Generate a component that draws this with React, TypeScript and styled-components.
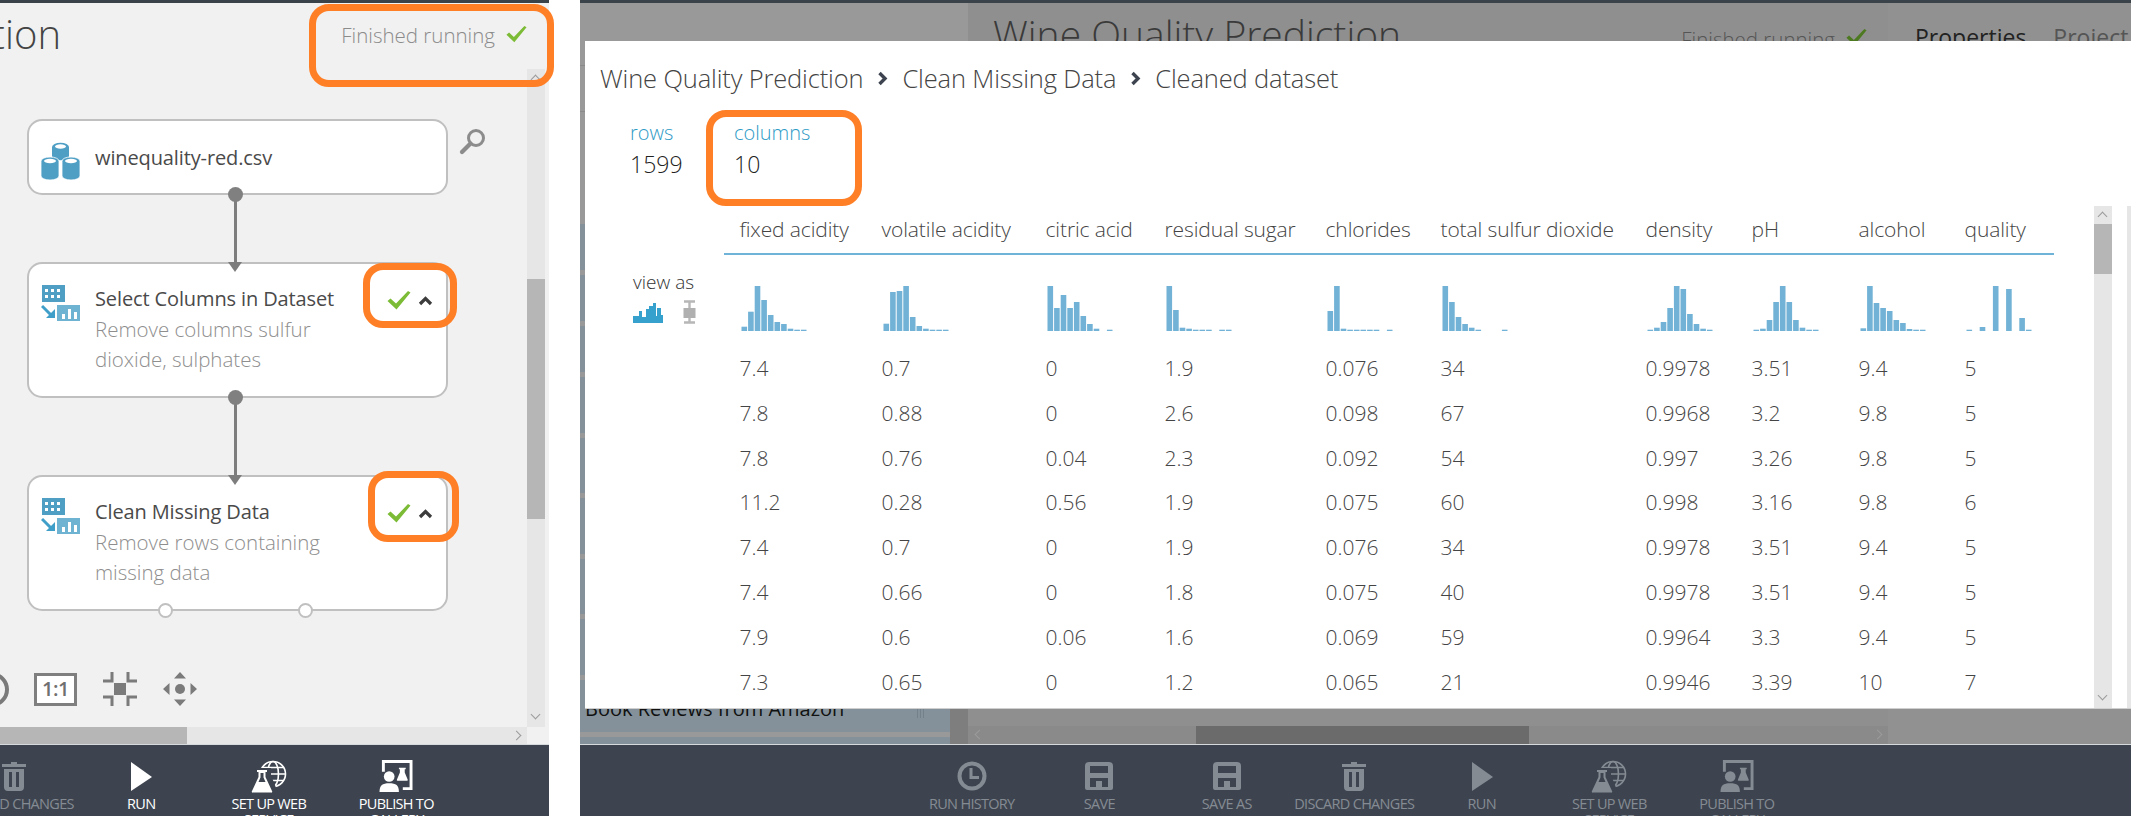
import React from "react";
import styled, { createGlobalStyle } from "styled-components";

const GlobalStyle = createGlobalStyle`
  html, body {
    margin: 0;
    padding: 0;
    width: 2131px;
    height: 816px;
    overflow: hidden;
    background: #fff;
    font-family: "Open Sans", "Liberation Sans", sans-serif;
  }
`;

const Page = styled.div`
  position: relative;
  display: flex;
  width: 2131px;
  height: 816px;
  overflow: hidden;
`;

const LeftShot = styled.section`
  display: flex;
  flex-direction: column;
  width: 549px;
  margin-right: 31px;
  background: #f1f1f1;
`;

const RightShot = styled.section`
  position: relative;
  display: flex;
  flex-direction: column;
  flex: 1;
  min-width: 0;
`;

const TopStrip = styled.div`
  flex: none;
  height: 3px;
  background: #3a424a;
`;

const HeaderRow = styled.header`
  flex: none;
  display: flex;
  justify-content: space-between;
  height: 66px;
`;

const ClippedTitle = styled.div`
  display: flex;
  justify-content: flex-end;
  width: 61px;
  overflow: hidden;
  white-space: nowrap;
  font-size: 40px;
  font-weight: 300;
  line-height: 62px;
  color: #444;
`;

const Status = styled.div`
  display: flex;
  gap: 11px;
  align-items: center;
  height: 64px;
  margin-right: 22px;
  font-size: 20.5px;
  font-weight: 300;
  color: #8b8b8b;
  svg {
    margin-top: -2px;
  }
`;

const MainRow = styled.div`
  flex: 1;
  display: flex;
  min-height: 0;
`;

const Canvas = styled.div`
  position: relative;
  flex: none;
  width: 527px;
`;

const VScroll = styled.div<{ $thumbTop: number; $thumbHeight: number; $dim?: boolean }>`
  position: relative;
  flex: none;
  width: 18px;
  background: ${(p) => (p.$dim ? "linear-gradient(#999 0 66px, #7e7e7e 66px)" : "#e6e6e6")};
  &::after {
    content: "";
    position: absolute;
    left: 0;
    right: 0;
    top: ${(p) => p.$thumbTop}px;
    height: ${(p) => p.$thumbHeight}px;
    background: #b6b6b6;
  }
`;

const ScrollArrow = styled.span<{ $side: "top" | "bottom" | "left" | "right" }>`
  position: absolute;
  width: 7px;
  height: 7px;
  box-sizing: border-box;
  border-left: 1px solid #9b9b9b;
  border-top: 1px solid #9b9b9b;
  ${(p) => p.$side === "top" && "top: 7px; left: 5px; transform: rotate(45deg);"}
  ${(p) => p.$side === "bottom" && "bottom: 9px; left: 5px; transform: rotate(225deg);"}
  ${(p) => p.$side === "right" && "top: 5px; right: 7px; transform: rotate(135deg);"}
  ${(p) => p.$side === "left" && "top: 5px; left: 8px; transform: rotate(-45deg);"}
`;

const HScrollRow = styled.div`
  position: relative;
  flex: none;
  display: flex;
  height: 17px;
`;

const HTrack = styled.div`
  position: relative;
  width: 527px;
  background: #e6e6e6;
`;

const HThumb = styled.div`
  width: 187px;
  height: 100%;
  background: #b6b6b6;
`;

const Node = styled.div<{ $top: number; $height: number }>`
  position: absolute;
  left: 27px;
  top: ${(p) => p.$top}px;
  box-sizing: border-box;
  width: 421px;
  height: ${(p) => p.$height}px;
  display: flex;
  background: #fff;
  border: 2px solid #c0c0c0;
  border-radius: 15px;
`;

const NodeIcon = styled.div<{ $top: number }>`
  flex: none;
  width: 66px;
  padding: ${(p) => p.$top}px 0 0 12px;
  box-sizing: border-box;
  svg {
    display: block;
  }
`;

const NodeText = styled.div<{ $top: number }>`
  padding-top: ${(p) => p.$top}px;
`;

const NodeTitle = styled.div`
  font-size: 20px;
  font-weight: 400;
  line-height: 30px;
  letter-spacing: -0.12px;
  color: #4a4a4a;
  white-space: nowrap;
`;

const NodeNote = styled.div`
  width: 270px;
  font-size: 20.5px;
  font-weight: 300;
  line-height: 30px;
  color: #8e8e8e;
`;

const NodeState = styled.div<{ $top: number }>`
  position: absolute;
  left: 358px;
  top: ${(p) => p.$top}px;
  display: flex;
  align-items: center;
  gap: 7px;
`;

const Port = styled.span<{ $x: number; $y: number; $hollow?: boolean }>`
  position: absolute;
  left: ${(p) => p.$x - 7}px;
  top: ${(p) => p.$y - 7}px;
  box-sizing: border-box;
  width: 15px;
  height: 15px;
  border-radius: 50%;
  background: ${(p) => (p.$hollow ? "#fff" : "#808080")};
  border: ${(p) => (p.$hollow ? "2px solid #c0c0c0" : "none")};
`;

const Wire = styled.span<{ $y: number; $h: number }>`
  position: absolute;
  left: 234px;
  top: ${(p) => p.$y}px;
  width: 3px;
  height: ${(p) => p.$h}px;
  background: #7d7d7d;
`;

const WireHead = styled.span<{ $y: number }>`
  position: absolute;
  left: 228px;
  top: ${(p) => p.$y}px;
  width: 0;
  height: 0;
  border-left: 7.5px solid transparent;
  border-right: 7.5px solid transparent;
  border-top: 10px solid #7d7d7d;
`;

const Loupe = styled.div`
  position: absolute;
  left: 459px;
  top: 59px;
`;

const ZoomTools = styled.div`
  position: absolute;
  left: -26px;
  top: 603px;
  display: flex;
  align-items: center;
  height: 34px;
`;

const ZoomCircle = styled.span`
  box-sizing: border-box;
  width: 35px;
  height: 35px;
  margin-right: 25px;
  border: 4px solid #7a7a7a;
  border-radius: 50%;
`;

const ActualSize = styled.span`
  box-sizing: border-box;
  width: 43px;
  height: 33px;
  margin-right: 26px;
  border: 3px solid #7f7f7f;
  background: #fff;
  text-align: center;
  font-size: 20px;
  font-weight: 600;
  line-height: 26px;
  letter-spacing: -0.5px;
  color: #707070;
`;

const ToolIcon = styled.span`
  display: block;
  width: 34px;
  height: 34px;
  margin-right: 26px;
`;

const CommandBar = styled.footer<{ $left: number }>`
  flex: none;
  display: flex;
  height: 71px;
  overflow: hidden;
  background: #3d444f;
  border-top: 1px solid #d6dadd;
  & > :first-child {
    margin-left: ${(p) => p.$left}px;
  }
`;

const Command = styled.div<{ $active?: boolean }>`
  flex: none;
  display: flex;
  flex-direction: column;
  align-items: center;
  width: 127.5px;
  padding-top: 15px;
  box-sizing: border-box;
  color: ${(p) => (p.$active ? "#ffffff" : "#858b93")};
  svg {
    display: block;
    flex: none;
    height: 33px;
  }
`;

const CommandLabel = styled.div`
  flex: none;
  width: 124px;
  margin-top: 3px;
  text-align: center;
  font-size: 14.5px;
  font-weight: 400;
  line-height: 16px;
  letter-spacing: -0.7px;
`;

const Backdrop = styled.div`
  flex: 1;
  display: flex;
  min-height: 0;
  background: #919191;
`;

const NavColumn = styled.div`
  flex: none;
  display: flex;
  flex-direction: column;
  width: 370px;
  background: #999;
`;

const NavRow = styled.div<{ $h: number; $blue?: boolean; $line?: boolean }>`
  flex: none;
  height: ${(p) => p.$h}px;
  padding-left: 5px;
  overflow: hidden;
  white-space: nowrap;
  font-size: 21px;
  line-height: ${(p) => p.$h}px;
  color: #0f3c4e;
  background: ${(p) => (p.$blue ? "#84919a" : "#999")};
  border-bottom: ${(p) => (p.$line ? "1px solid #8a8a8a" : "none")};
`;

const BookRow = styled(NavRow)`
  position: relative;
  line-height: 58px;
  font-size: 20px;
  color: #111;
  &::after {
    content: "";
    position: absolute;
    left: 337px;
    top: 26px;
    width: 8px;
    height: 12px;
    background: repeating-linear-gradient(90deg, #74808a 0 1px, transparent 1px 3px);
  }
`;

const DimCenter = styled.div`
  position: relative;
  flex: none;
  display: flex;
  flex-direction: column;
  width: 920px;
  background: #8f8f8f;
`;

const DimTool = styled.span<{ $x: number }>`
  position: absolute;
  left: ${(p) => p.$x}px;
  bottom: 35px;
  width: 30px;
  height: 4px;
  border-radius: 0 0 15px 15px;
  background: #5c5c5c;
`;

const DimHeader = styled.div`
  flex: 1;
  display: flex;
  justify-content: space-between;
  padding: 0 21px 0 25px;
  font-weight: 300;
  color: #3a3a3a;
`;

const DimTitle = styled.div`
  font-size: 39px;
  line-height: 62px;
  white-space: nowrap;
`;

const DimStatus = styled.div`
  display: flex;
  gap: 11px;
  align-items: flex-start;
  padding-top: 22px;
  font-size: 20.5px;
  color: #555;
  svg {
    margin-top: 3px;
  }
`;

const DimHScroll = styled.div`
  flex: none;
  display: flex;
  position: relative;
  height: 18px;
  background: #8a8a8a;
`;

const DimThumb = styled.div`
  width: 333px;
  margin-left: 228px;
  background: #6b6b6b;
`;

const DimSide = styled.div`
  flex: 1;
  display: flex;
  gap: 27px;
  padding: 18px 0 0 27px;
  font-size: 23px;
  color: #222;
  white-space: nowrap;
  span + span {
    color: #555;
  }
`;

const Modal = styled.div`
  position: absolute;
  left: 5px;
  top: 41px;
  right: 0;
  height: 667px;
  display: flex;
  flex-direction: column;
  overflow: hidden;
  background: #fff;
  box-shadow: 0 1px 0 #cfcfcf;
`;

const Breadcrumb = styled.nav`
  flex: none;
  display: flex;
  align-items: center;
  gap: 14px;
  height: 32px;
  padding: 21px 0 0 15px;
  font-size: 25.5px;
  font-weight: 300;
  letter-spacing: -0.15px;
  color: #444;
`;

const Stats = styled.div`
  flex: none;
  display: flex;
  height: 112px;
  padding: 26px 0 0 45px;
  box-sizing: border-box;
`;

const Stat = styled.div`
  width: 104px;
`;

const StatLabel = styled.div`
  font-size: 20px;
  font-weight: 300;
  line-height: 26px;
  color: #2e9bc6;
`;

const StatValue = styled.div`
  font-size: 23px;
  font-weight: 300;
  line-height: 36px;
  color: #222;
`;

const ModalBody = styled.div`
  flex: 1;
  display: flex;
  min-height: 0;
`;

const ViewAs = styled.div`
  flex: none;
  box-sizing: border-box;
  width: 139px;
  padding: 63px 0 0 48px;
  font-size: 19px;
  font-weight: 300;
  color: #333;
`;

const ViewIcons = styled.div`
  display: flex;
  gap: 19px;
  align-items: center;
  margin-top: 5px;
`;

const DataTable = styled.div`
  flex: none;
  width: 1330px;
`;

const columnTemplate = "142px 164px 119px 161px 115px 205px 106px 107px 106px 105px";

const HeadRow = styled.div`
  display: grid;
  grid-template-columns: ${columnTemplate};
  height: 47px;
  border-bottom: 2px solid #6fb3d8;
`;

const HeadCell = styled.div`
  padding: 8px 0 0 15.5px;
  font-size: 21px;
  font-weight: 300;
  line-height: 30px;
  letter-spacing: -0.12px;
  color: #444;
  white-space: nowrap;
`;

const HistRow = styled.div`
  display: grid;
  grid-template-columns: ${columnTemplate};
  height: 91px;
`;

const HistCell = styled.div`
  padding: 30px 0 0 15.5px;
  svg {
    display: block;
  }
`;

const ValueRow = styled.div`
  display: grid;
  grid-template-columns: ${columnTemplate};
  height: 44.8px;
`;

const ValueCell = styled.div`
  padding-left: 15.5px;
  font-size: 21px;
  font-weight: 300;
  line-height: 44.8px;
  color: #444;
`;

const ModalSide = styled.div`
  flex: 1;
  display: flex;
  justify-content: space-between;
  padding-left: 40px;
`;

const EdgeTrack = styled.div`
  width: 4px;
  background: #e6e6e6;
`;

const Callout = styled.div<{ $x: number; $y: number; $w: number; $h: number }>`
  position: absolute;
  left: ${(p) => p.$x}px;
  top: ${(p) => p.$y}px;
  width: ${(p) => p.$w}px;
  height: ${(p) => p.$h}px;
  box-sizing: border-box;
  border: 7px solid #ff7f27;
  border-radius: 20px;
`;

const Check = ({ size = 24, color = "#7cbb35" }: { size?: number; color?: string }) => (
  <svg width={size} height={size * 0.84} viewBox="0 0 24 20">
    <path d="M0.5 11 L3.5 8.5 L9 13.5 L21 1 L23.5 2.5 L9.5 19.5 Z" fill={color} />
  </svg>
);

const Chevron = () => (
  <svg width="15" height="11" viewBox="0 0 15 11">
    <path d="M2 9 L7.5 3.5 L13 9" fill="none" stroke="#3c3c3c" strokeWidth="3.2" />
  </svg>
);

const Crumb = () => (
  <svg width="11" height="15" viewBox="0 0 11 15">
    <path d="M2.5 2 L8 7.5 L2.5 13" fill="none" stroke="#3d444f" strokeWidth="3.4" />
  </svg>
);

const SearchIcon = () => (
  <svg width="27" height="27" viewBox="0 0 27 27">
    <circle cx="17" cy="10" r="7.5" fill="none" stroke="#8c8c8c" strokeWidth="3" />
    <path d="M11.5 15.5 L3 24" stroke="#8c8c8c" strokeWidth="4.2" strokeLinecap="round" />
  </svg>
);

const DatasetIcon = () => (
  <svg width="39" height="39" viewBox="0 0 39 39" fill="#4f9fc5">
    <path d="M11 6 a8 4 0 0 1 17 0 v9 a8 4 0 0 1 -17 0 Z" />
    <ellipse cx="19.5" cy="5.5" rx="5.5" ry="2.2" fill="#fff" />
    <path d="M0 20 a9 4 0 0 1 18 0 v15 a9 4 0 0 1 -18 0 Z" stroke="#fff" strokeWidth="0.8" />
    <ellipse cx="9" cy="20" rx="6" ry="2.2" fill="#fff" />
    <path d="M21 20 a9 4 0 0 1 18 0 v15 a9 4 0 0 1 -18 0 Z" stroke="#fff" strokeWidth="0.8" />
    <ellipse cx="30" cy="20" rx="6" ry="2.2" fill="#fff" />
  </svg>
);

const ModuleIcon = () => (
  <svg width="39" height="36" viewBox="0 0 39 36">
    <rect x="1" y="0" width="23" height="17" fill="#4f9fc5" />
    {[4, 10, 16].map((x) =>
      [4, 10].map((y) => <rect key={`${x}-${y}`} x={x} y={y} width="3" height="3" fill="#fff" />)
    )}
    <rect x="16" y="20" width="23" height="16" fill="#6fb3d3" />
    <rect x="21" y="29" width="3" height="5" fill="#fff" />
    <rect x="27" y="24" width="3" height="10" fill="#fff" />
    <rect x="33" y="27" width="3" height="7" fill="#fff" />
    <path d="M1 21 L11 31" stroke="#3f9fc8" strokeWidth="3" />
    <path d="M5 33 H14 V24 Z" fill="#3f9fc8" />
  </svg>
);

const FitIcon = () => (
  <svg width="34" height="34" viewBox="0 0 34 34" fill="none" stroke="#7b7b7b" strokeWidth="3">
    <path d="M9 0 V9 H0 M25 0 V9 H34 M9 34 V25 H0 M25 34 V25 H34" />
    <rect x="11" y="11" width="12" height="12" fill="#7b7b7b" stroke="none" />
  </svg>
);

const PanIcon = () => (
  <svg width="34" height="34" viewBox="0 0 34 34" fill="#7b7b7b">
    <circle cx="17" cy="17" r="5" />
    <path d="M17 0 L23 6.5 H11 Z M17 34 L23 27.5 H11 Z M0 17 L6.5 11 V23 Z M34 17 L27.5 11 V23 Z" />
  </svg>
);

const ClockIcon = () => (
  <svg viewBox="0 0 30 33" width="30">
    <circle cx="15" cy="16" r="12.5" fill="none" stroke="currentColor" strokeWidth="4" />
    <path d="M14 8 V17.5 H22" fill="none" stroke="currentColor" strokeWidth="3" />
  </svg>
);

const SaveIcon = () => (
  <svg viewBox="0 0 30 33" width="30">
    <path
      fillRule="evenodd"
      fill="currentColor"
      d="M5 2 H25 a4 4 0 0 1 4 4 V28 a2 2 0 0 1 -2 2 H3 a2 2 0 0 1 -2 -2 V6 a4 4 0 0 1 4 -4 Z M6 6 V13 H24 V6 Z M6 18 V27 H12 V21 H18 V27 H24 V18 Z"
    />
    <rect x="13.5" y="23" width="3" height="4" fill="currentColor" />
  </svg>
);

const TrashIcon = () => (
  <svg viewBox="0 0 26 33" width="26">
    <path fill="currentColor" d="M10 2 H16 V4 H25 V7 H1 V4 H10 Z" />
    <path
      fillRule="evenodd"
      fill="currentColor"
      d="M3 9 H23 V27 a4 4 0 0 1 -4 4 H7 a4 4 0 0 1 -4 -4 Z M8 12 V27 H11 V12 Z M15 12 V27 H18 V12 Z"
    />
  </svg>
);

const PlayIcon = () => (
  <svg viewBox="0 0 24 33" width="24">
    <path fill="currentColor" d="M2 2 L23 17 L2 31 Z" />
  </svg>
);

const WebIcon = () => (
  <svg viewBox="0 0 38 33" width="38">
    <g fill="none" stroke="currentColor" strokeWidth="1.6">
      <circle cx="23" cy="14" r="12.5" />
      <ellipse cx="23" cy="14" rx="5.5" ry="12.5" />
      <path d="M10.5 14 H35.5 M12.5 7.5 H33.5 M12.5 20.5 H33.5" />
    </g>
    <path fill="#3d444f" d="M6 8 H21 V15 L28 33 H0 Z" />
    <path
      fill="currentColor"
      d="M7 10 H17 V12 H15.5 V17 L22 31 a1 1 0 0 1 -1 1.6 H3 a1 1 0 0 1 -1 -1.6 L8.5 17 V12 H7 Z"
    />
    <path fill="#3d444f" d="M10.5 13 H13.5 V17.5 L15.5 22 H8.5 L10.5 17.5 Z" />
  </svg>
);

const PublishIcon = () => (
  <svg viewBox="0 0 34 34" width="34">
    <path fill="none" stroke="currentColor" strokeWidth="3" d="M4 12 V1.5 H32.5 V29.5 H24" />
    <path fill="currentColor" d="M20 8 H27 V9.5 H26 V13 L29 20 a1 1 0 0 1 -1 1.4 H19 a1 1 0 0 1 -1 -1.4 L21 13 V9.5 H20 Z" />
    <circle cx="10" cy="17" r="5.5" fill="currentColor" />
    <path fill="currentColor" d="M0 33 C0 26 3 24 10 24 C17 24 20 26 20 33 Z" />
  </svg>
);

const ViewHistIcon = () => (
  <svg width="31" height="21" viewBox="0 0 31 21">
    <path fill="#36a1cd" d="M0 21 V14 H6 V9 H9 V15 H13 V7 H16 V4 H20 V1 H23 V14 H24 V6 H28 V13 H30 V21 Z" />
  </svg>
);

const ViewBoxIcon = () => (
  <svg width="13" height="24" viewBox="0 0 13 24">
    <path fill="none" stroke="#b7b7b7" strokeWidth="2.4" d="M1 1.5 H12 M1 22.5 H12 M6.5 1.5 V22.5" />
    <rect x="0.5" y="8" width="12" height="10" fill="#b0b0b0" />
  </svg>
);

const Histogram = ({ bars }: { bars: number[] }) => (
  <svg width="70" height="46" viewBox="0 0 70 46">
    {bars.map((h, i) =>
      h > 0 ? <rect key={i} x={1.5 + i * 6.6} y={46 - h} width={5.6} height={h} fill="#72b2d6" /> : null
    )}
  </svg>
);

const columns = [
  { name: "fixed acidity", bars: [4.3, 19.3, 45, 31, 16, 9, 7, 2.3, 1.3, 1.3] },
  { name: "volatile acidity", bars: [7.3, 39, 40, 45, 14, 5, 2.3, 1.3, 1.3, 1.3] },
  { name: "citric acid", bars: [45, 23, 36, 23, 29, 15, 7, 2.3, 0, 1.3] },
  { name: "residual sugar", bars: [45, 21, 3.3, 2.3, 1.3, 1.3, 1.3, 0, 1.3, 1.3] },
  { name: "chlorides", bars: [20, 45, 2.3, 1.3, 1.3, 1.3, 1.3, 1.3, 0, 1.3] },
  { name: "total sulfur dioxide", bars: [45, 29, 14, 7, 3.3, 1.3, 0, 0, 0, 1.3] },
  { name: "density", bars: [1.3, 3.3, 9, 23, 45, 42, 17, 7, 2.3, 1.3] },
  { name: "pH", bars: [1.3, 2.3, 11, 29, 45, 29, 11, 3.3, 1.3, 1.3] },
  { name: "alcohol", bars: [2.7, 45, 28, 23, 20, 11, 8, 2, 1.3, 1.3] },
  { name: "quality", bars: [1.3, 0, 4, 0, 45, 0, 42, 0, 13, 1.3] },
];

const rows = [
  ["7.4", "0.7", "0", "1.9", "0.076", "34", "0.9978", "3.51", "9.4", "5"],
  ["7.8", "0.88", "0", "2.6", "0.098", "67", "0.9968", "3.2", "9.8", "5"],
  ["7.8", "0.76", "0.04", "2.3", "0.092", "54", "0.997", "3.26", "9.8", "5"],
  ["11.2", "0.28", "0.56", "1.9", "0.075", "60", "0.998", "3.16", "9.8", "6"],
  ["7.4", "0.7", "0", "1.9", "0.076", "34", "0.9978", "3.51", "9.4", "5"],
  ["7.4", "0.66", "0", "1.8", "0.075", "40", "0.9978", "3.51", "9.4", "5"],
  ["7.9", "0.6", "0.06", "1.6", "0.069", "59", "0.9964", "3.3", "9.4", "5"],
  ["7.3", "0.65", "0", "1.2", "0.065", "21", "0.9946", "3.39", "10", "7"],
];

const leftCommands = [
  { label: "DISCARD CHANGES", icon: <TrashIcon />, active: false },
  { label: "RUN", icon: <PlayIcon />, active: true },
  { label: "SET UP WEB SERVICE", icon: <WebIcon />, active: true },
  { label: "PUBLISH TO GALLERY", icon: <PublishIcon />, active: true },
];

const rightCommands = [
  { label: "RUN HISTORY", icon: <ClockIcon /> },
  { label: "SAVE", icon: <SaveIcon /> },
  { label: "SAVE AS", icon: <SaveIcon /> },
  { label: "DISCARD CHANGES", icon: <TrashIcon /> },
  { label: "RUN", icon: <PlayIcon /> },
  { label: "SET UP WEB SERVICE", icon: <WebIcon /> },
  { label: "PUBLISH TO GALLERY", icon: <PublishIcon /> },
];

function App() {
  return (
    <Page>
      <GlobalStyle />
      <LeftShot>
        <TopStrip />
        <HeaderRow>
          <ClippedTitle>Wine Quality Prediction</ClippedTitle>
          <Status>
            Finished running
            <Check size={21} />
          </Status>
        </HeaderRow>
        <MainRow>
          <Canvas>
            <Loupe>
              <SearchIcon />
            </Loupe>
            <Wire $y={125} $h={68} />
            <Wire $y={328} $h={78} />
            <Node $top={50} $height={76}>
              <NodeIcon $top={20}>
                <DatasetIcon />
              </NodeIcon>
              <NodeText $top={22}>
                <NodeTitle>winequality-red.csv</NodeTitle>
              </NodeText>
            </Node>
            <Node $top={193} $height={136}>
              <NodeIcon $top={21}>
                <ModuleIcon />
              </NodeIcon>
              <NodeText $top={20}>
                <NodeTitle>Select Columns in Dataset</NodeTitle>
                <NodeNote>Remove columns sulfur dioxide, sulphates</NodeNote>
              </NodeText>
              <NodeState $top={26}>
                <Check size={24} />
                <Chevron />
              </NodeState>
            </Node>
            <Node $top={406} $height={136}>
              <NodeIcon $top={21}>
                <ModuleIcon />
              </NodeIcon>
              <NodeText $top={20}>
                <NodeTitle>Clean Missing Data</NodeTitle>
                <NodeNote>Remove rows containing missing data</NodeNote>
              </NodeText>
              <NodeState $top={26}>
                <Check size={24} />
                <Chevron />
              </NodeState>
            </Node>
            <WireHead $y={193} />
            <WireHead $y={406} />
            <Port $x={235} $y={125} />
            <Port $x={235} $y={328} />
            <Port $x={165} $y={541} $hollow />
            <Port $x={305} $y={541} $hollow />
            <ZoomTools>
              <ZoomCircle />
              <ActualSize>1:1</ActualSize>
              <ToolIcon>
                <FitIcon />
              </ToolIcon>
              <ToolIcon>
                <PanIcon />
              </ToolIcon>
            </ZoomTools>
          </Canvas>
          <VScroll $thumbTop={210} $thumbHeight={240}>
            <ScrollArrow $side="top" />
            <ScrollArrow $side="bottom" />
          </VScroll>
        </MainRow>
        <HScrollRow>
          <HTrack>
            <HThumb />
            <ScrollArrow $side="right" />
          </HTrack>
        </HScrollRow>
        <CommandBar $left={-50}>
          {leftCommands.map((c) => (
            <Command key={c.label} $active={c.active}>
              {c.icon}
              <CommandLabel>{c.label}</CommandLabel>
            </Command>
          ))}
        </CommandBar>
      </LeftShot>

      <RightShot>
        <TopStrip />
        <Backdrop>
          <NavColumn>
            <NavRow $h={62} $line />
            <NavRow $h={45} $line>
              e
            </NavRow>
            <NavRow $h={47}>s</NavRow>
            <NavRow $h={65}>W</NavRow>
            <NavRow $h={46} $blue />
            <NavRow $h={5} />
            <NavRow $h={46} $blue />
            <NavRow $h={5} />
            <NavRow $h={46} $blue>
              S
            </NavRow>
            <NavRow $h={5} />
            <NavRow $h={55.6} $blue />
            <NavRow $h={5} />
            <NavRow $h={55.6} $blue />
            <NavRow $h={5} />
            <NavRow $h={55.6} $blue />
            <NavRow $h={5} />
            <NavRow $h={55.6} $blue />
            <NavRow $h={5} />
            <NavRow $h={55.6} $blue />
            <NavRow $h={5} />
            <BookRow $h={52} $blue>
              Book Reviews from Amazon
            </BookRow>
            <NavRow $h={5} />
            <NavRow $h={8} $blue />
          </NavColumn>
          <VScroll $thumbTop={0} $thumbHeight={0} $dim />
          <DimCenter>
            <DimHeader>
              <DimTitle>Wine Quality Prediction</DimTitle>
              <DimStatus>
                Finished running
                <Check size={21} color="#4d7a20" />
              </DimStatus>
            </DimHeader>
            <DimTool $x={97} />
            <DimTool $x={347} />
            <DimHScroll>
              <DimThumb />
              <ScrollArrow $side="left" />
              <ScrollArrow $side="right" />
            </DimHScroll>
          </DimCenter>
          <DimSide>
            <span>Properties</span>
            <span>Project</span>
          </DimSide>
        </Backdrop>
        <CommandBar $left={328}>
          {rightCommands.map((c) => (
            <Command key={c.label}>
              {c.icon}
              <CommandLabel>{c.label}</CommandLabel>
            </Command>
          ))}
        </CommandBar>
        <Modal>
          <Breadcrumb>
            <span>Wine Quality Prediction</span>
            <Crumb />
            <span>Clean Missing Data</span>
            <Crumb />
            <span>Cleaned dataset</span>
          </Breadcrumb>
          <Stats>
            <Stat>
              <StatLabel>rows</StatLabel>
              <StatValue>1599</StatValue>
            </Stat>
            <Stat>
              <StatLabel>columns</StatLabel>
              <StatValue>10</StatValue>
            </Stat>
          </Stats>
          <ModalBody>
            <ViewAs>
              view as
              <ViewIcons>
                <ViewHistIcon />
                <ViewBoxIcon />
              </ViewIcons>
            </ViewAs>
            <DataTable>
              <HeadRow>
                {columns.map((c) => (
                  <HeadCell key={c.name}>{c.name}</HeadCell>
                ))}
              </HeadRow>
              <HistRow>
                {columns.map((c) => (
                  <HistCell key={c.name}>
                    <Histogram bars={c.bars} />
                  </HistCell>
                ))}
              </HistRow>
              {rows.map((row, r) => (
                <ValueRow key={r}>
                  {row.map((v, i) => (
                    <ValueCell key={i}>{v}</ValueCell>
                  ))}
                </ValueRow>
              ))}
            </DataTable>
            <ModalSide>
              <VScroll $thumbTop={18} $thumbHeight={50}>
                <ScrollArrow $side="top" />
                <ScrollArrow $side="bottom" />
              </VScroll>
              <EdgeTrack />
            </ModalSide>
          </ModalBody>
        </Modal>
      </RightShot>

      <Callout $x={309} $y={4} $w={245} $h={83} />
      <Callout $x={363} $y={263} $w={94} $h={65} />
      <Callout $x={368} $y={471} $w={91} $h={71} />
      <Callout $x={706} $y={110} $w={156} $h={96} />
    </Page>
  );
}

export default App;
